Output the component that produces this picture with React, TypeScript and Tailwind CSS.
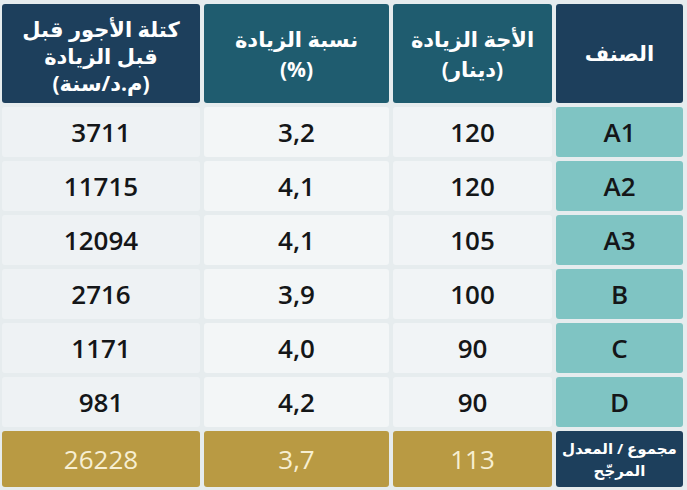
import React from "react"

type Row = { cls: string; bonus: string; rate: string; mass: string }

const rows: Row[] = [
  { cls: "A1", bonus: "120", rate: "3,2", mass: "3711" },
  { cls: "A2", bonus: "120", rate: "4,1", mass: "11715" },
  { cls: "A3", bonus: "105", rate: "4,1", mass: "12094" },
  { cls: "B", bonus: "100", rate: "3,9", mass: "2716" },
  { cls: "C", bonus: "90", rate: "4,0", mass: "1171" },
  { cls: "D", bonus: "90", rate: "4,2", mass: "981" },
]

const cell = "flex items-center justify-center rounded-[3px]"
const num = "text-[26px] font-semibold text-[#141618]"
const gold = "bg-[#b99a43] text-[26px] font-medium text-[#f7efd2]"

export default function App() {
  return (
    <div className="w-[687px] h-[490px] bg-[#e6ecee] pt-[4px] pl-[2px] pr-[4px] overflow-hidden font-['Open_Sans','DejaVu_Sans',sans-serif]">
      <div
        dir="rtl"
        className="grid grid-cols-[127px_159px_185px_198px] grid-rows-[99px_repeat(6,50px)_56px] gap-[4px]"
      >
        <div className={`${cell} bg-[#1d3f5c] text-white text-[21px] font-bold`}>الصنف</div>
        <div className={`${cell} flex-col bg-[#1f5c6f] text-white text-[21px] font-bold leading-[30px]`}>
          <span>الأجة الزيادة</span>
          <span>(دينار)</span>
        </div>
        <div className={`${cell} flex-col bg-[#1f5c6f] text-white text-[21px] font-bold leading-[30px]`}>
          <span>نسبة الزيادة</span>
          <span>(%)</span>
        </div>
        <div className={`${cell} flex-col bg-[#1d3f5c] text-white text-[21px] font-bold leading-[27px] pt-[6px]`}>
          <span>كتلة الأجور قبل</span>
          <span>قبل الزيادة</span>
          <span>(م.د/سنة)</span>
        </div>

        {rows.map((r) => (
          <React.Fragment key={r.cls}>
            <div className={`${cell} bg-[#7fc4c3] ${num}`}>{r.cls}</div>
            <div className={`${cell} bg-[#f1f4f6] ${num}`}>{r.bonus}</div>
            <div className={`${cell} bg-[#f3f6f7] ${num}`}>{r.rate}</div>
            <div className={`${cell} bg-[#eef2f4] ${num}`}>{r.mass}</div>
          </React.Fragment>
        ))}

        <div className={`${cell} flex-col bg-[#1d3f5c] text-white text-[15px] font-bold leading-[22px]`}>
          <span className="whitespace-nowrap">مجموع / المعدل</span>
          <span>المرجّح</span>
        </div>
        <div className={`${cell} ${gold}`}>113</div>
        <div className={`${cell} ${gold}`}>3,7</div>
        <div className={`${cell} ${gold}`}>26228</div>
      </div>
    </div>
  )
}
